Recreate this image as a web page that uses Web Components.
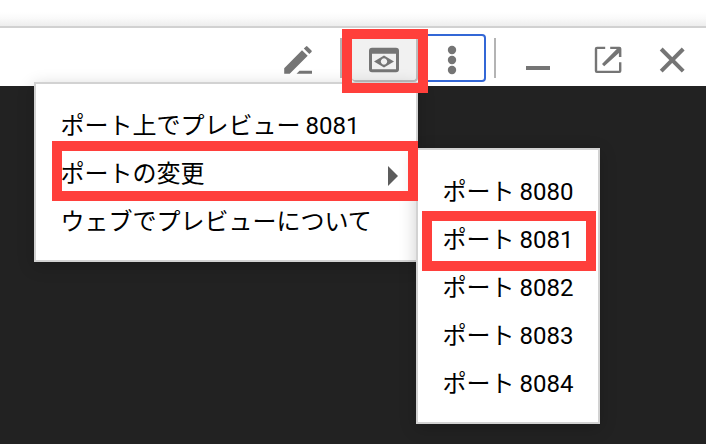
<!DOCTYPE html>
<html lang="ja">
<head>
<meta charset="utf-8">
<title>ウェブでプレビュー</title>
<style>
html,body{margin:0;height:100%;overflow:hidden;background:#222}
body{font-family:Roboto,"Noto Sans CJK JP",sans-serif;font-size:24px;color:#000}
</style>
</head>
<body>
<shell-window></shell-window>
<script>
function define(name, markup) {
  const t = document.createElement('template');
  t.innerHTML = markup;
  customElements.define(name, class extends HTMLElement {
    constructor() {
      super();
      this.attachShadow({ mode: 'open' }).append(t.content.cloneNode(true));
    }
  });
}

define('tool-button', `
<style>
:host{display:block;box-sizing:border-box;width:68px;height:48px;color:#757575;flex:none}
:host([pressed]){width:66px;background:#f1f1f1;border:solid #bdbdbd;border-width:0 2px 2px 0;border-radius:0 0 4px 4px}
:host([focused]){border:2px solid #3367d6;border-radius:4px}
::slotted(svg){display:block;fill:currentColor}
:host([focused]) ::slotted(svg){margin:-2px}
</style><slot></slot>`);

define('tool-divider', `
<style>:host{display:block;width:2px;height:40px;background:#b4b4b4;margin-top:4px;flex:none}</style>`);

define('tool-bar', `
<style>
:host{display:block}
.edge{box-sizing:border-box;border-bottom:2px solid #d1d1d1;height:28px;background:linear-gradient(#fff 12px,#fafafa 18px,#ededed 26px)}
.row{height:58px;box-sizing:border-box;padding:6px 0 0 264px;display:flex;background:#fff}
</style>
<div class="edge"></div><div class="row"><slot></slot></div>`);

define('menu-item', `
<style>
:host{display:flex;height:48px;line-height:48px;align-items:center;justify-content:space-between;white-space:nowrap;word-spacing:-1px}
:host([submenu])::after{content:"";border:solid transparent;border-width:10px 0 10px 10px;border-left-color:#5c5c5c;margin:3px 18px 0 0}
</style><span><slot></slot></span>`);

define('popup-menu', `
<style>
:host{display:block;position:absolute;box-sizing:border-box;background:#fff;border:2px solid #d2d2d2;padding:18px 0 0 24.600px;box-shadow:0 4px 16px rgba(0,0,0,.2)}
</style><slot></slot>`);

define('highlight-box', `
<style>:host{display:block;position:absolute;box-sizing:border-box;border:10px solid #ff3f3b}</style>`);

define('shell-window', `
<style>
:host{display:block;position:relative;width:706px;height:444px;background:#222;overflow:hidden}
.main{left:34px;top:82px;width:384px;height:180px}
.ports{left:416px;top:148px;width:184px;height:276px}
.h1{left:342px;top:29px;width:86px;height:64px}
.h2{left:52px;top:141px;width:366px;height:60px}
.h3{left:422px;top:211px;width:174px;height:60px}
.edit{width:76px}.preview{margin-left:10px}.d2{margin-left:8px}.min{margin-left:8px}
</style>
<tool-bar>
  <tool-button class="edit"><svg width="76" height="48" viewBox="264 34 76 48"><path d="M284.2 73.8v-5.6L302 50.2l5.7 5.6-18 18zM303.8 48.6l2.2-2.2q.7-.7 1.4 0l4.1 4.1q.6.7 0 1.4l-2.2 2.2zM299.5 70.8H312v3h-15.5z"/></svg></tool-button>
  <tool-divider></tool-divider>
  <tool-button class="preview" pressed><svg width="66" height="48" viewBox="352 34 66 48"><path fill-rule="evenodd" d="M372 47.8h24a3 3 0 0 1 3 3v18.4a3 3 0 0 1-3 3h-24a3 3 0 0 1-3-3V50.800a3 3 0 0 1 3-3zM372 53.700v15.500h24V53.700z"/><path fill-rule="evenodd" d="M374 61.500l10-6 10 6-10 6zM384 58.300a3.200 3.200 0 1 0 .01 0z"/></svg></tool-button>
  <tool-button focused><svg width="68" height="48" viewBox="418 34 68 48"><circle cx="452" cy="50" r="4.200"/><circle cx="452" cy="60" r="4.200"/><circle cx="452" cy="70" r="4.200"/></svg></tool-button>
  <tool-divider class="d2"></tool-divider>
  <tool-button class="min"><svg width="68" height="48" viewBox="504 34 68 48"><path d="M526 66h24v4h-24z"/></svg></tool-button>
  <tool-button><svg width="68" height="48" viewBox="572 34 68 48"><path d="M597 46.700h8.200v2.200h-8v21.800h21.800v-8.400h2.400v8.700q0 2-2 2h-22.600q-2 0-2-2V48.700q0-2 2.200-2zM610.200 46.700h9.200q2 0 2 2v8.300h-2.500v-3.900L604.200 66.200l-2.200-2.200 14.800-15.100h-6.600z"/></svg></tool-button>
  <tool-button><svg width="68" height="48" viewBox="640 34 68 48"><path fill="none" stroke="currentColor" stroke-width="4" d="M661.200 49l22 22.200M683.200 49l-22 22.200"/></svg></tool-button>
</tool-bar>
<popup-menu class="main">
  <menu-item>ポート上でプレビュー 8081</menu-item>
  <menu-item submenu>ポートの変更</menu-item>
  <menu-item>ウェブでプレビューについて</menu-item>
</popup-menu>
<popup-menu class="ports">
  <menu-item>ポート 8080</menu-item>
  <menu-item>ポート 8081</menu-item>
  <menu-item>ポート 8082</menu-item>
  <menu-item>ポート 8083</menu-item>
  <menu-item>ポート 8084</menu-item>
</popup-menu>
<highlight-box class="h1"></highlight-box>
<highlight-box class="h2"></highlight-box>
<highlight-box class="h3"></highlight-box>`);
</script>
</body>
</html>
